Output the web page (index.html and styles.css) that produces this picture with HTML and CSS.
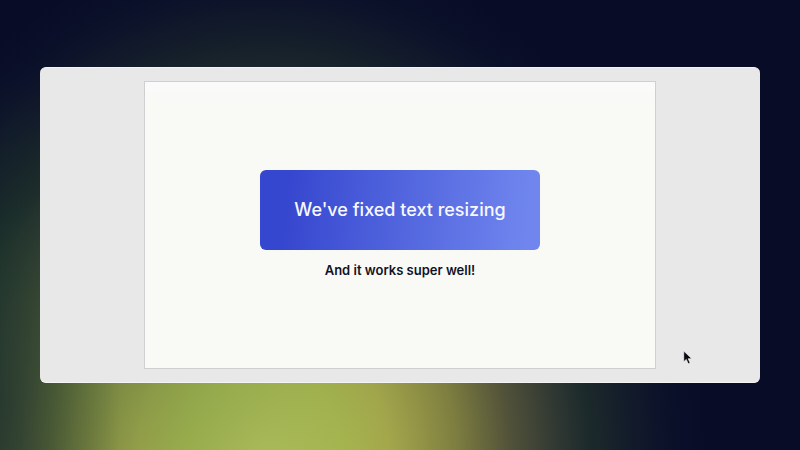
FILE: index.html
```html
<!DOCTYPE html>
<html lang="en">
<head>
  <meta charset="utf-8">
  <meta name="viewport" content="width=device-width, initial-scale=1">
  <title>Text resizing</title>
  <link rel="stylesheet" href="styles.css">
</head>
<body>
  <main class="workspace">
    <section class="slide">
      <h1 class="banner">We've fixed text resizing</h1>
      <p class="caption">And it works super well!</p>
    </section>
    <svg class="cursor" viewBox="0 0 10 15" aria-hidden="true">
      <path d="M1 1V11L3.4 8.8L5.2 13L7 12.2L5.2 8.2H8.6Z" fill="#090a10" stroke="#fafafa" stroke-width="0.6"/>
    </svg>
  </main>
</body>
</html>
```
FILE: styles.css
```css
* {
  box-sizing: border-box;
}

body {
  margin: 0;
  min-height: 100vh;
  padding: 67px 5%;
  display: grid;
  font-family: Inter, "Liberation Sans", sans-serif;
  background:
    radial-gradient(ellipse 120px 330px at 0% 90%, rgba(22, 44, 42, 0.6), rgba(24, 52, 40, 0.4) 40%, transparent),
    radial-gradient(ellipse 280px 200px at 18% 84%, rgba(70, 120, 60, 0.3), transparent),
    radial-gradient(ellipse 445px 520px at 33% 102%, #b8c45e 0%, #abb850 18%, #a6a84c 28%, #7e7f40 43%, #53533a 55%, #303833 66%, #1c2a2b 73%, #131c2a 82%, #0c122a 90%, #0a0e29 95%, #080c26 100%);
}

.workspace {
  position: relative;
  display: grid;
  place-items: center;
  padding: 12px 0;
  border: 1px solid #f4f4f5;
  border-width: 1px 0;
  border-radius: 6px;
  background: #e8e8e8;
}

.slide {
  width: 71%;
  aspect-ratio: 16 / 9;
  display: flex;
  flex-direction: column;
  align-items: center;
  justify-content: center;
  gap: 10px;
  border: 1px solid #cfcfd2;
  background: linear-gradient(#fafafb, #f9faf6 8%);
}

.banner {
  width: 55%;
  margin: 0;
  padding: 28px 0;
  border-radius: 6px;
  background: linear-gradient(95deg, #3647cf 10%, #7086ee 95%);
  color: #f7f8ff;
  font-size: 18px;
  font-weight: 500;
  line-height: 24px;
  text-align: center;
}

.caption {
  margin: 0;
  color: #101225;
  font-size: 13px;
  font-weight: 600;
  line-height: 20px;
}

.cursor {
  position: absolute;
  right: 9%;
  bottom: 16px;
  width: 14px;
  height: 16px;
}
```
